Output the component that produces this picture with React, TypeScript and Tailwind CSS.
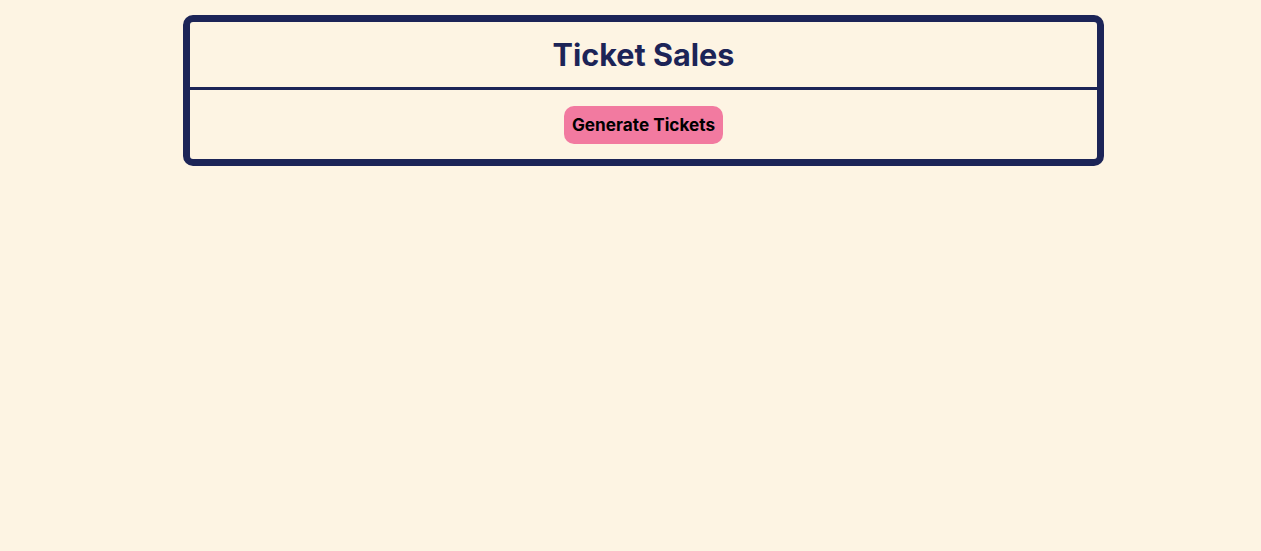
export default function App() {
  return (
    <div className="min-h-[551px] bg-[#fdf4e3] pt-[15px] font-['Inter',sans-serif]">
      <div className="ml-[183px] w-[921px] rounded-[10px] border-[7px] border-[#1c2457]">
        <div className="flex h-[68px] items-center justify-center border-b-[3px] border-[#1c2457]">
          <h1 className="text-[30.6px] font-bold text-[#1c2457]">Ticket Sales</h1>
        </div>
        <div className="flex h-[69px] items-center justify-center">
          <button className="h-[38px] rounded-[10px] bg-[#f27aa0] px-[8px] text-[17.2px] font-bold text-black">
            Generate Tickets
          </button>
        </div>
      </div>
    </div>
  );
}
